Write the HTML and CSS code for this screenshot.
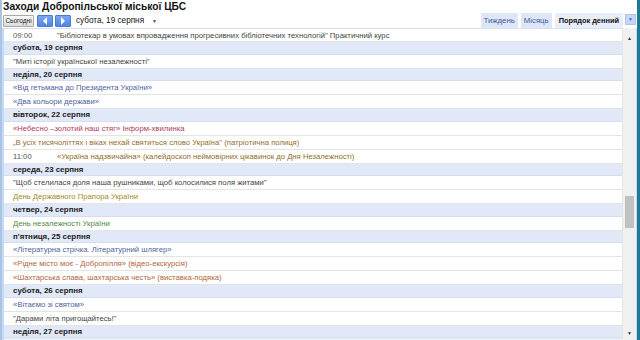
FILE: index.html
```html
<!DOCTYPE html>
<html lang="uk">
<head>
  <meta charset="UTF-8">
  <title>Заходи Добропільської міської ЦБС</title>
  <link rel="stylesheet" href="styles.css">
</head>
<body>

  <div class="cal">
    <!-- заголовок календаря -->
    <div class="cal-title">Заходи Добропільської міської ЦБС</div>

    <!-- панель навігації -->
    <div class="toolbar">
      <div class="nav">
        <button class="today-btn">Сьогодні</button>
        <button class="arrow-btn"><span class="tri-left"></span></button>
        <button class="arrow-btn"><span class="tri-right"></span></button>
        <span class="cur-date">субота, 19 серпня</span>
        <span class="date-drop">&#9660;</span>
      </div>
      <div class="tabs">
        <div class="tab">Тиждень</div>
        <div class="tab">Місяць</div>
        <div class="tab active">Порядок денний</div>
        <div class="tab-drop">&#9660;</div>
      </div>
    </div>

    <!-- список подій -->
    <div class="view">
      <div class="agenda">
        <div class="ev first"><span class="time">09:00</span><span class="c-dark">"Бібліотекар в умовах впровадження прогресивних бібліотечних технологій" Практичний курс</span></div>
        <div class="day">субота, 19 серпня</div>
        <div class="ev"><span class="c-dark">"Миті історії української незалежності"</span></div>
        <div class="day">неділя, 20 серпня</div>
        <div class="ev"><span class="c-blue">«Від гетьмана до Президента України»</span></div>
        <div class="ev"><span class="c-blue">«Два кольори держави»</span></div>
        <div class="day">вівторок, 22 серпня</div>
        <div class="ev"><span class="c-red">«Небесно –золотий наш стяг» Інформ-хвилинка</span></div>
        <div class="ev"><span class="c-gold">„В усіх тисячоліттях і віках нехай святиться слово Україна" (патріотична полиця)</span></div>
        <div class="ev"><span class="time">11:00</span><span class="c-gold">«Україна надзвичайна» (калейдоскоп неймовірних цікавинок до Дня Незалежності)</span></div>
        <div class="day">середа, 23 серпня</div>
        <div class="ev"><span class="c-dark">"Щоб стелилася доля наша рушниками, щоб колосилися поля житами"</span></div>
        <div class="ev"><span class="c-olive">День Державного Прапора України</span></div>
        <div class="day">четвер, 24 серпня</div>
        <div class="ev"><span class="c-green">День незалежності України</span></div>
        <div class="day">п'ятниця, 25 серпня</div>
        <div class="ev"><span class="c-blue">«Літературна стрічка. Літературний шлягер»</span></div>
        <div class="ev"><span class="c-orange">«Рідне місто моє - Добропілля» (відео-екскурсія)</span></div>
        <div class="ev"><span class="c-orange">«Шахтарська слава, шахтарська честь» (виставка-подяка)</span></div>
        <div class="day">субота, 26 серпня</div>
        <div class="ev"><span class="c-blue">«Вітаємо зі святом»</span></div>
        <div class="ev"><span class="c-dark">"Дарами літа пригощайтесь!"</span></div>
        <div class="day">неділя, 27 серпня</div>
      </div>
      <!-- смуга прокрутки -->
      <div class="scrollbar">
        <span class="sb-up">&#9650;</span>
        <div class="sb-track"><div class="sb-thumb"></div></div>
        <span class="sb-down">&#9660;</span>
      </div>
    </div>
  </div>

</body>
</html>
```

FILE: styles.css
```css
body {
  margin: 0;
  height: 340px;
  overflow: hidden;
  background: linear-gradient(90deg, #a9c6de 0, #a9c6de 2px, #1f7894 2px);
  font-family: "Liberation Sans", Arial, sans-serif;
}
.cal {
  margin: 0 3px 0 2px;
  height: 340px;
  background: #fff;
  display: flex;
  flex-direction: column;
}
/* заголовок */
.cal-title {
  height: 13px;
  padding-left: 1px;
  font-size: 10.2px;
  font-weight: bold;
  line-height: 14px;
  color: #111;
}
/* панель навігації */
.toolbar {
  height: 15px;
  display: flex;
  justify-content: space-between;
  align-items: flex-end;
}
.nav {
  display: flex;
  align-items: center;
  height: 15px;
  padding-left: 1px;
}
.today-btn {
  height: 12px;
  width: 31px;
  padding: 0;
  font-family: inherit;
  font-size: 6.5px;
  color: #222;
  background: linear-gradient(#fafafa, #dcdcdc);
  border: 1px solid #a8a8a8;
  border-radius: 1px;
}
.arrow-btn {
  height: 12px;
  width: 16px;
  margin-left: 3px;
  padding: 0;
  background: linear-gradient(#7aa6ee, #4f86e2);
  border: 1px solid #4a7bd0;
  border-radius: 1px;
  display: flex;
  align-items: center;
  justify-content: center;
}
.arrow-btn + .arrow-btn {
  margin-left: 2px;
}
.tri-left {
  border-top: 4px solid transparent;
  border-bottom: 4px solid transparent;
  border-right: 4px solid #fff;
}
.tri-right {
  border-top: 4px solid transparent;
  border-bottom: 4px solid transparent;
  border-left: 4px solid #fff;
}
.cur-date {
  margin-left: 5px;
  font-size: 8.2px;
  color: #111;
}
.date-drop {
  margin-left: 8px;
  font-size: 5px;
  color: #444;
}
/* вкладки */
.tabs {
  display: flex;
  align-items: flex-end;
  height: 15px;
}
.tab {
  height: 15px;
  margin-left: 3px;
  padding: 0 3px;
  font-size: 7.8px;
  line-height: 16px;
  color: #3a5aa8;
  background: #dfe6f5;
}
.tab.active {
  padding: 0 4px;
  color: #111;
  font-weight: bold;
  font-size: 7.4px;
  background: #e8eef7;
}
.tab-drop {
  width: 9px;
  height: 9px;
  margin: 0 1px 3px 2px;
  font-size: 5px;
  line-height: 9px;
  text-align: center;
  color: #3a6ad0;
  background: #c6d7f5;
  border: 1px solid #b0c4e8;
}
/* область подій */
.view {
  flex: 1;
  display: flex;
  border-left: 2px solid #c3d9ff;
  border-right: 1px solid #c3d9ff;
  background: #e8eef7;
  overflow: hidden;
}
.agenda {
  flex: 1;
  overflow: hidden;
  font-size: 7.7px;
}
.ev {
  box-sizing: border-box;
  height: 14px;
  padding-left: 9px;
  line-height: 13px;
  white-space: nowrap;
  background: #fff;
  border-bottom: 1px solid #e4e4e4;
}
.ev.first {
  border-top: 1px solid #d6e0f2;
}
.day {
  box-sizing: border-box;
  height: 12.5px;
  padding-left: 9px;
  line-height: 12px;
  font-size: 7.9px;
  font-weight: bold;
  color: #1a1a1a;
  background: #e1e9f8;
  border-bottom: 1px solid #d5def0;
}
.time {
  display: inline-block;
  width: 44px;
  color: #555;
}
.c-dark { color: #444; }
.c-blue { color: #4f62a0; }
.c-red { color: #b23a5e; }
.c-gold { color: #8f6e2c; }
.c-olive { color: #a28a26; }
.c-green { color: #4c8a3f; }
.c-orange { color: #b2643a; }
/* смуга прокрутки */
.scrollbar {
  width: 13px;
  display: flex;
  flex-direction: column;
  align-items: center;
  background: #f0f0f0;
  border-left: 1px solid #e6e6e6;
}
.sb-up, .sb-down {
  height: 14px;
  font-size: 5px;
  line-height: 14px;
  color: #333;
}
.sb-up {
  margin-top: 3px;
}
.sb-track {
  flex: 1;
  width: 100%;
  padding-top: 151px;
}
.sb-thumb {
  height: 32px;
  margin: 0 2px;
  background: #c1c1c1;
}
```
